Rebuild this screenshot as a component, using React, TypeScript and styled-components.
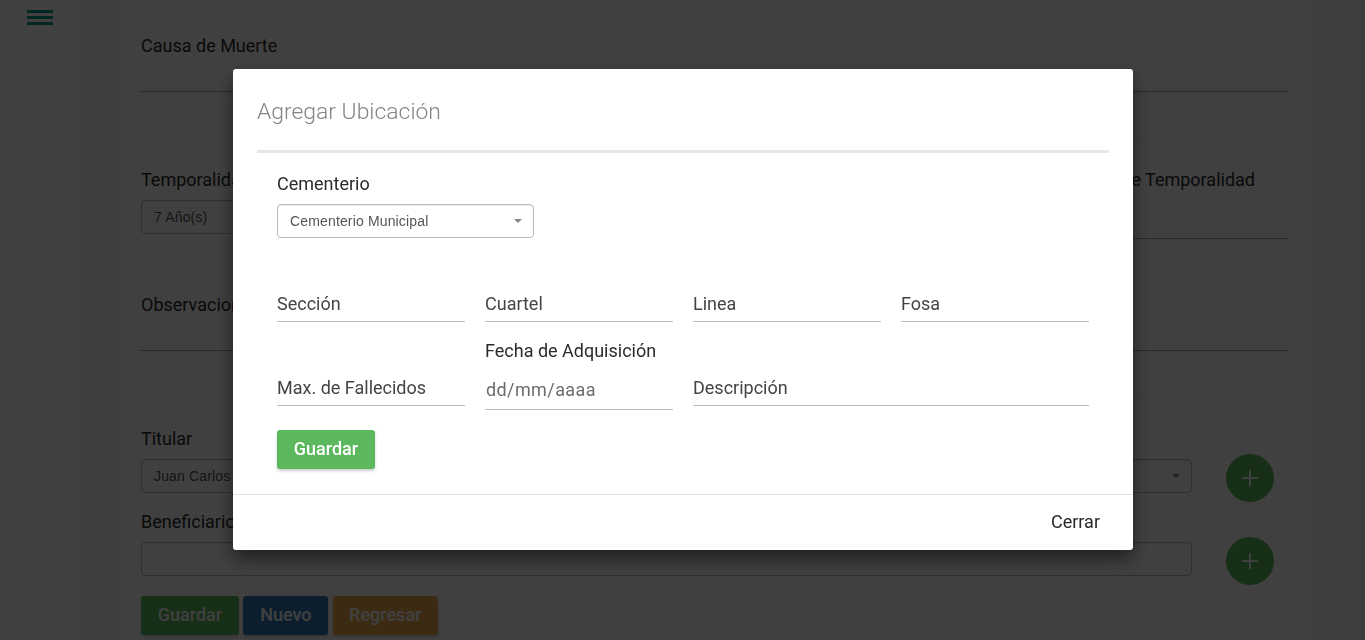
import React from "react";
import styled, { createGlobalStyle } from "styled-components";

const GlobalStyle = createGlobalStyle`
  * { box-sizing: border-box; }
  body {
    margin: 0;
    overflow: hidden;
    background: #fafafa;
    font-family: Roboto, "Liberation Sans", sans-serif;
    font-size: 18px;
    line-height: 20px;
    color: #2b2b2b;
  }
  button { font: inherit; }
`;

const Page = styled.div`
  display: flex;
  width: 100%;
  height: 640px;
  overflow: hidden;
`;

const Sidebar = styled.aside`
  flex: 0 0 81px;
  padding: 10px 0 0 27px;
  background: #fff;
  border-right: 1px solid #eee;
`;

const MenuIcon = styled.svg`
  display: block;
  width: 26px;
  height: 15px;
`;

const Content = styled.main`
  flex: 1;
  padding: 0 55px 0 41px;
  background: #f6f6f6;
`;

const Card = styled.section`
  height: 640px;
  padding: 36px 22px 0 19px;
  background: #fff;
`;

const Block = styled.div<{ $h: number }>`
  height: ${(p) => p.$h}px;
`;

const Underlined = styled(Block)`
  border-bottom: 1px solid #9e9e9e;
`;

const Rule = styled.hr<{ $gap: number }>`
  height: 1px;
  margin: 0 0 ${(p) => p.$gap}px;
  border: 0;
  background: #eee;
`;

const SplitRow = styled.div`
  display: flex;
  justify-content: space-between;
  height: 125px;
`;

const DateField = styled.div`
  width: 560px;
  height: 69px;
  padding-right: 33px;
  text-align: right;
  border-bottom: 1px solid #9e9e9e;
`;

const SelectBox = styled.div<{ $w: number }>`
  display: flex;
  align-items: center;
  justify-content: space-between;
  width: ${(p) => p.$w}px;
  height: 34px;
  margin-top: 10px;
  padding: 0 11px 0 12px;
  border: 1px solid #bbb;
  border-radius: 4px;
  background: #fff;
  color: #555;
  font: 14px/20px "Liberation Sans", Arial, sans-serif;
  letter-spacing: 0.15px;
  box-shadow: inset 0 1px 1px rgba(0, 0, 0, 0.075);
`;

const Caret = styled.i`
  border: 4px solid transparent;
  border-top-color: #888;
  border-bottom: 0;
`;

const PersonRow = styled.div`
  display: flex;
  justify-content: space-between;
  height: 83px;
  padding-right: 14px;
`;

const RoundButton = styled.button`
  display: flex;
  align-items: center;
  justify-content: center;
  width: 48px;
  height: 48px;
  margin-top: 25px;
  padding: 0;
  border: 0;
  border-radius: 50%;
  background: #5cb85c;
`;

const Actions = styled.div`
  display: flex;
  gap: 4.4px;
  padding-top: 1px;
`;

const Button = styled.button<{ $w: number; $bg: string }>`
  width: ${(p) => p.$w}px;
  height: 39px;
  padding: 0 0 2px;
  border: 0;
  border-radius: 3px;
  background: ${(p) => p.$bg};
  color: #fff;
  font-weight: 500;
  text-align: center;
  box-shadow: 0 2px 3px rgba(0, 0, 0, 0.2);
`;

const Backdrop = styled.div`
  position: fixed;
  inset: 0;
  display: flex;
  justify-content: center;
  align-items: flex-start;
  padding: 69px 0 0 1px;
  background: rgba(0, 0, 0, 0.75);
`;

const Dialog = styled.div`
  width: 900px;
  height: 481px;
  border-radius: 3px;
  background: #fff;
  box-shadow: 0 9px 18px rgba(0, 0, 0, 0.5);
`;

const DialogBody = styled.div`
  height: 425px;
  padding: 24px 24px 0;
`;

const Title = styled.h2`
  box-sizing: content-box;
  height: 52px;
  margin: 0;
  padding-top: 5px;
  border-bottom: 3px solid #e6e6e6;
  color: #848484;
  font-size: 22.9px;
  font-weight: 300;
  line-height: 28px;
`;

const DialogForm = styled.form`
  padding: 21px 20px 0;
`;

const Fields = styled.div<{ $top: number }>`
  display: grid;
  grid-template-columns: repeat(4, 188px);
  column-gap: 20px;
  align-items: start;
  margin-top: ${(p) => p.$top}px;
`;

const Field = styled.div<{ $wide?: boolean; $top?: number }>`
  grid-column: span ${(p) => (p.$wide ? 2 : 1)};
  height: 28px;
  margin-top: ${(p) => p.$top ?? 0}px;
  border-bottom: 1px solid #bdbdbd;
  color: #444;
`;

const LabelledDate = styled.div`
  height: 69px;
  border-bottom: 1px solid #bdbdbd;
`;

const DatePlaceholder = styled.div`
  margin-top: 19px;
  padding-left: 1px;
  color: #6c6c6c;
  letter-spacing: 0.4px;
`;

const Footer = styled.footer`
  height: 56px;
  padding: 17px 33px 0 0;
  border-top: 1px solid #e0e0e0;
  text-align: right;
`;

const Plus = () => (
  <svg width="16" height="16" viewBox="0 0 16 16">
    <path d="M8 0v16M0 8h16" stroke="#fff" strokeWidth="2" />
  </svg>
);

export default function App() {
  return (
    <>
      <GlobalStyle />
      <Page>
        <Sidebar>
          <MenuIcon viewBox="0 0 26 15">
            <path d="M0 1.5h26M0 7.5h26M0 13.5h26" stroke="#009688" strokeWidth="3" />
          </MenuIcon>
        </Sidebar>
        <Content>
          <Card>
            <Underlined $h={56}>Causa de Muerte</Underlined>
            <Block $h={44} />
            <Rule $gap={33} />
            <SplitRow>
              <div>
                Temporalidad
                <SelectBox $w={560}>7 Año(s)<Caret /></SelectBox>
              </div>
              <DateField>Fecha de Temporalidad</DateField>
            </SplitRow>
            <Underlined $h={56}>Observaciones</Underlined>
            <Block $h={45} />
            <Rule $gap={32} />
            <PersonRow>
              <div>
                Titular
                <SelectBox $w={1051}>Juan Carlos<Caret /></SelectBox>
              </div>
              <RoundButton><Plus /></RoundButton>
            </PersonRow>
            <PersonRow>
              <div>
                Beneficiarios
                <SelectBox $w={1051} />
              </div>
              <RoundButton><Plus /></RoundButton>
            </PersonRow>
            <Actions>
              <Button $w={98} $bg="#5cb85c">Guardar</Button>
              <Button $w={85} $bg="#337ab7">Nuevo</Button>
              <Button $w={105} $bg="#f0ad4e">Regresar</Button>
            </Actions>
          </Card>
        </Content>
      </Page>
      <Backdrop>
        <Dialog>
          <DialogBody>
            <Title>Agregar Ubicación</Title>
            <DialogForm>
              Cementerio
              <SelectBox $w={257}>Cementerio Municipal<Caret /></SelectBox>
              <Fields $top={56}>
                <Field>Sección</Field>
                <Field>Cuartel</Field>
                <Field>Linea</Field>
                <Field>Fosa</Field>
              </Fields>
              <Fields $top={19}>
                <Field $top={37}>Max. de Fallecidos</Field>
                <LabelledDate>
                  Fecha de Adquisición
                  <DatePlaceholder>dd/mm/aaaa</DatePlaceholder>
                </LabelledDate>
                <Field $wide $top={37}>Descripción</Field>
              </Fields>
              <Fields $top={20}>
                <Button type="button" $w={98} $bg="#5cb85c">Guardar</Button>
              </Fields>
            </DialogForm>
          </DialogBody>
          <Footer>Cerrar</Footer>
        </Dialog>
      </Backdrop>
    </>
  );
}
